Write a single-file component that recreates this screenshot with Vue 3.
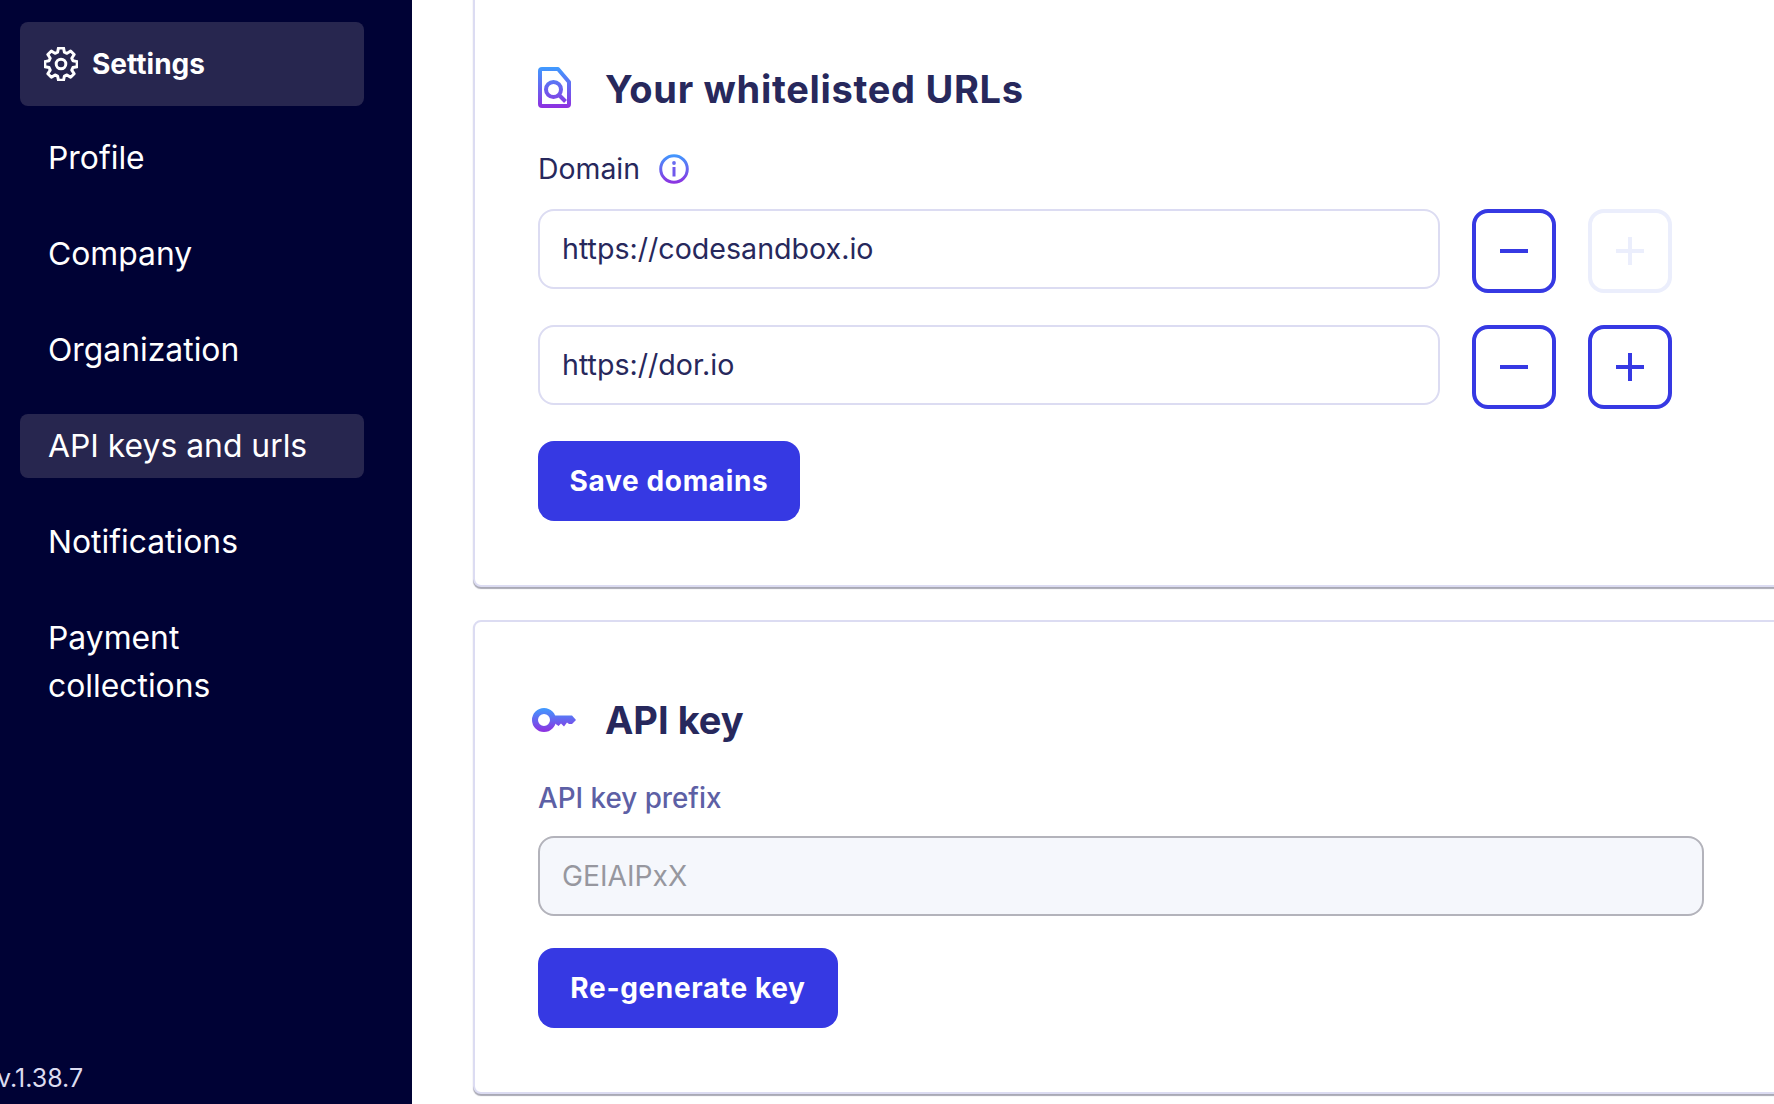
<template>
  <div class="page">
    <aside class="sidebar">
      <nav class="nav">
        <div class="nav-head">
          <svg class="gear" width="34" height="34" viewBox="0 0 24 24" fill="none" stroke="#fff" stroke-width="2.100" stroke-linejoin="round" stroke-linecap="round">
            <path d="M10.200 1.500h3.600l.6 3 1.800.8 2.600-1.700 2.500 2.500-1.700 2.600.8 1.800 3 .6v3.600l-3 .6-.8 1.800 1.700 2.600-2.500 2.500-2.600-1.700-1.800.8-.6 3h-3.600l-.6-3-1.800-.8-2.600 1.700-2.500-2.500 1.700-2.600-.8-1.800-3-.6v-3.600l3-.6.8-1.800-1.700-2.600 2.500-2.500 2.600 1.700 1.800-.8z" transform="translate(0 -.800)"/>
            <circle cx="12" cy="12" r="3.400"/>
          </svg>
          <span>Settings</span>
        </div>
        <a v-for="item in links" :key="item" class="nav-item" :class="{ active: item === 'API keys and urls' }">{{ item }}</a>
      </nav>
      <div class="version">v.1.38.7</div>
    </aside>

    <main class="main">
      <section class="card first">
        <div class="card-title">
          <svg class="title-icon" width="33" height="41" viewBox="0 0 33 41">
            <defs>
              <linearGradient id="grad" gradientUnits="userSpaceOnUse" x1="0" y1="0" x2="0" y2="41">
                <stop offset="0" stop-color="#3f9bff" />
                <stop offset="1" stop-color="#8f2fe0" />
              </linearGradient>
            </defs>
            <path d="M4 2h16l11 13v22a2 2 0 0 1-2 2H4a2 2 0 0 1-2-2V4a2 2 0 0 1 2-2z" fill="none" stroke="url(#grad)" stroke-width="4" stroke-linejoin="round"/>
            <circle cx="15.500" cy="22.500" r="7.500" fill="none" stroke="url(#grad)" stroke-width="4"/>
            <path d="M20.500 27.500l7 7" stroke="url(#grad)" stroke-width="4"/>
          </svg>
          <h2 class="wide">Your whitelisted URLs</h2>
        </div>

        <div class="label-row">
          <span class="label">Domain</span>
          <svg width="30" height="30" viewBox="0 0 30 30">
            <defs>
              <linearGradient id="grad2" gradientUnits="userSpaceOnUse" x1="15" y1="0" x2="15" y2="30">
                <stop offset="0" stop-color="#3f9bff" />
                <stop offset="1" stop-color="#8f2fe0" />
              </linearGradient>
            </defs>
            <circle cx="15" cy="15" r="13.300" fill="none" stroke="url(#grad2)" stroke-width="3"/>
            <circle cx="15" cy="9" r="1.900" fill="#6a6cf0"/>
            <rect x="13.500" y="13" width="3" height="9.500" fill="#7058ec"/>
          </svg>
        </div>

        <div v-for="row in domains" :key="row.url" class="domain-row">
          <div class="input">{{ row.url }}</div>
          <button class="square">
            <svg width="28" height="28" viewBox="0 0 28 28"><rect y="12" width="28" height="4" fill="currentColor"/></svg>
          </button>
          <button class="square" :class="{ disabled: !row.canAdd }">
            <svg width="28" height="28" viewBox="0 0 28 28"><rect y="12" width="28" height="4" fill="currentColor"/><rect x="12" width="4" height="28" fill="currentColor"/></svg>
          </button>
        </div>

        <button class="primary save">Save domains</button>
      </section>

      <section class="card second">
        <div class="card-title key-title">
          <svg class="title-icon" width="44" height="24" viewBox="0 0 44 24">
            <defs>
              <linearGradient id="grad3" gradientUnits="userSpaceOnUse" x1="22" y1="0" x2="22" y2="24">
                <stop offset="0" stop-color="#3f9bff" />
                <stop offset="1" stop-color="#8f2fe0" />
              </linearGradient>
            </defs>
            <circle cx="12" cy="12" r="9" fill="none" stroke="url(#grad3)" stroke-width="6"/>
            <path fill="url(#grad3)" d="M21 7.500h19l4 4.500-4 4h-3l-2-1.500-3 4-3-3-2.500 2.500-3.500-2.500h-2z"/>
          </svg>
          <h2>API key</h2>
        </div>

        <div class="prefix-label">API key prefix</div>
        <div class="input readonly">GEIAIPxX</div>
        <button class="primary regen">Re-generate key</button>
      </section>
    </main>
  </div>
</template>

<script setup>
const links = ['Profile', 'Company', 'Organization', 'API keys and urls', 'Notifications', 'Payment collections']

const domains = [
  { url: 'https://codesandbox.io', canAdd: false },
  { url: 'https://dor.io', canAdd: true }
]
</script>

<style>
html, body {
  margin: 0;
  background: #fff;
  overflow: hidden;
}
</style>

<style scoped>
.page {
  display: flex;
  width: 1774px;
  height: 1104px;
  overflow: hidden;
  font-family: Inter, "Liberation Sans", sans-serif;
  color: #27285c;
}

.sidebar {
  position: relative;
  flex: 0 0 412px;
  background: #000235;
  color: #fff;
  box-sizing: border-box;
  padding: 22px 48px 0 20px;
}

.nav {
  display: flex;
  flex-direction: column;
}

.nav-head {
  display: flex;
  align-items: center;
  gap: 14px;
  height: 84px;
  padding-left: 24px;
  background: #27264f;
  border-radius: 8px;
  font-size: 28px;
  font-weight: 700;
  margin-bottom: 20px;
}

.nav-item {
  display: block;
  padding: 8px 28px;
  margin-bottom: 32px;
  border-radius: 8px;
  font-size: 31.850px;
  line-height: 48px;
}

.nav-item.active {
  background: #27264f;
}

.version {
  position: absolute;
  left: -3px;
  bottom: 6px;
  font-size: 25px;
  line-height: 40px;
  color: #dcdcf0;
}

.main {
  flex: 1;
  min-width: 0;
  padding: 0 0 0 61px;
}

.card {
  width: 1400px;
  box-sizing: border-box;
  background: #fff;
  border: 2px solid #dcdcf2;
  border-radius: 8px;
  box-shadow: 0 2px 1px #a9a9b5;
  padding-left: 63px;
}

.first {
  height: 597px;
  margin-top: -10px;
  padding-top: 73px;
}

.second {
  height: 474px;
  margin-top: 33px;
  padding-top: 74px;
}

.card-title {
  display: flex;
  align-items: center;
  height: 48px;
  position: relative;
}

.card-title h2 {
  margin: 0 0 0 67px;
  font-size: 38px;
  line-height: 48px;
  font-weight: 700;
}

.card-title h2.wide {
  letter-spacing: .7px;
}

.title-icon {
  position: absolute;
  left: 0;
  top: 2px;
}

.key-title .title-icon {
  left: -6px;
  top: 12px;
}

.label-row {
  display: flex;
  align-items: center;
  gap: 19px;
  margin-top: 36px;
  height: 40px;
}

.label {
  font-size: 28.400px;
  line-height: 40px;
}

.domain-row {
  display: flex;
  align-items: flex-start;
  gap: 32px;
  margin-top: 20px;
}

.domain-row + .domain-row {
  margin-top: 32px;
}

.input {
  box-sizing: border-box;
  flex: 0 0 902px;
  width: 902px;
  height: 80px;
  padding-left: 22px;
  border: 2px solid #dcdcf2;
  border-radius: 16px;
  font-size: 28.600px;
  line-height: 76px;
}

.square {
  box-sizing: border-box;
  display: flex;
  align-items: center;
  justify-content: center;
  width: 84px;
  height: 84px;
  padding: 0;
  background: #fff;
  border: 4px solid #3639e3;
  border-radius: 16px;
  color: #3639e3;
}

.square.disabled {
  border-color: #ebeefc;
  color: #ebeefc;
}

.primary {
  display: block;
  box-sizing: border-box;
  height: 80px;
  border: 0;
  border-radius: 16px;
  background: #3639e3;
  color: #fff;
  font-family: inherit;
  font-size: 28px;
  font-weight: 700;
  letter-spacing: .65px;
}

.save {
  width: 262px;
  margin-top: 32px;
}

.regen {
  width: 300px;
  margin-top: 32px;
}

.prefix-label {
  margin-top: 34px;
  font-size: 27.800px;
  line-height: 40px;
  font-weight: 500;
  color: #5d60a5;
}

.readonly {
  width: 1166px;
  margin-top: 18px;
  background: #f5f7fc;
  border-color: #b3b3bb;
  color: #97979f;
  font-size: 28.200px;
}
</style>
